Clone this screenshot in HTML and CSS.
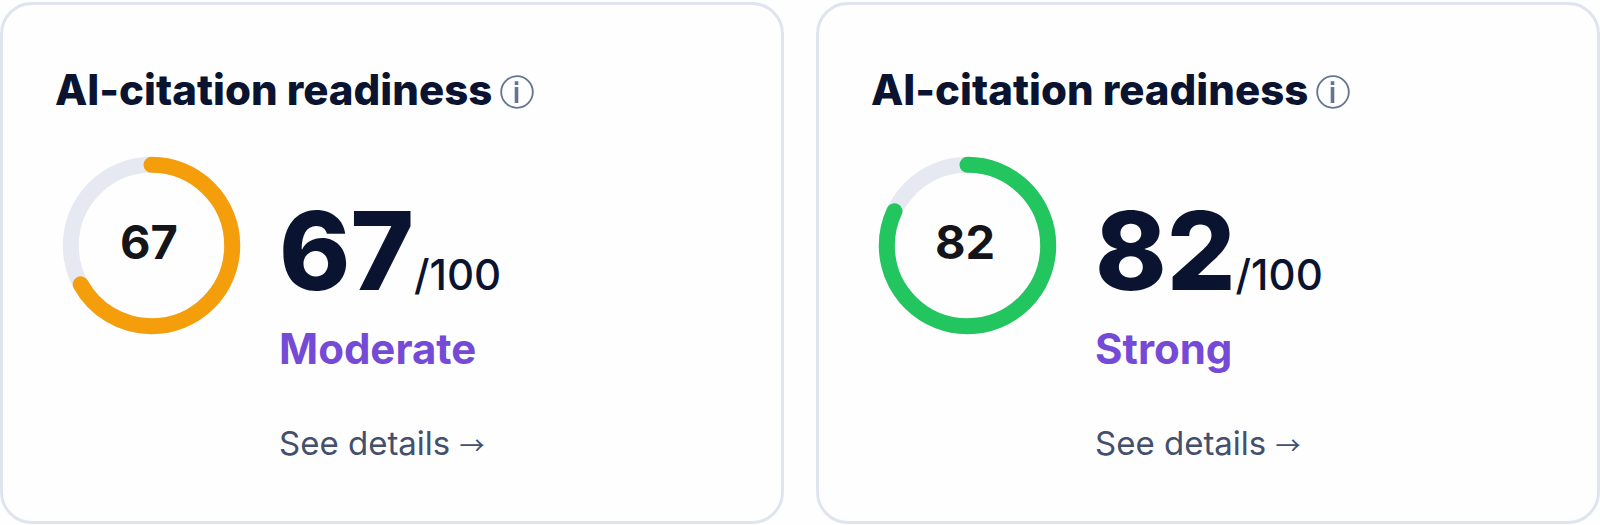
FILE: index.html
```
<!DOCTYPE html>
<html lang="en">

<head>
    <meta charset="UTF-8">
    <meta name="viewport" content="width=device-width, initial-scale=1.0">
    <title>AI-citation readiness</title>
    <link rel="stylesheet" href="styles.css">
</head>

<body>
    <main class="cards">
        <section class="card">
            <div class="card-header">
                <h2 class="card-title">AI-citation readiness</h2>
                <button class="info-button" type="button" aria-label="About this score">
                    <svg class="info-icon" viewBox="0 0 34 34" aria-hidden="true">
                        <circle cx="17" cy="17" r="15.8" />
                        <path d="M16.5 12v16" />
                        <path d="M16.5 6.2v3.8" />
                    </svg>
                </button>
            </div>
            <div class="card-body">
                <svg class="gauge gauge-moderate" viewBox="0 0 192 192" role="img" aria-label="67 of 100">
                    <circle class="gauge-track" cx="96.5" cy="95.5" r="80.7" />
                    <circle class="gauge-value" cx="96.5" cy="95.5" r="80.7" pathLength="100" stroke-dasharray="67 100" transform="rotate(-90 96.5 95.5)" />
                    <text class="gauge-text" x="94" y="109">67</text>
                </svg>
                <div class="details">
                    <p class="score"><strong class="score-value">67</strong><span class="score-max">/100</span></p>
                    <p class="rating">Moderate</p>
                    <a class="details-link" href="#">See details <span class="arrow">→</span></a>
                </div>
            </div>
        </section>

        <section class="card">
            <div class="card-header">
                <h2 class="card-title">AI-citation readiness</h2>
                <button class="info-button" type="button" aria-label="About this score">
                    <svg class="info-icon" viewBox="0 0 34 34" aria-hidden="true">
                        <circle cx="17" cy="17" r="15.8" />
                        <path d="M16.5 12v16" />
                        <path d="M16.5 6.2v3.8" />
                    </svg>
                </button>
            </div>
            <div class="card-body">
                <svg class="gauge gauge-strong" viewBox="0 0 192 192" role="img" aria-label="82 of 100">
                    <circle class="gauge-track" cx="96.5" cy="95.5" r="80.7" />
                    <circle class="gauge-value" cx="96.5" cy="95.5" r="80.7" pathLength="100" stroke-dasharray="82 100" transform="rotate(-90 96.5 95.5)" />
                    <text class="gauge-text" x="94" y="109">82</text>
                </svg>
                <div class="details">
                    <p class="score"><strong class="score-value">82</strong><span class="score-max">/100</span></p>
                    <p class="rating">Strong</p>
                    <a class="details-link" href="#">See details <span class="arrow">→</span></a>
                </div>
            </div>
        </section>
    </main>
</body>

</html>
```

FILE: styles.css
```
* {
    box-sizing: border-box;
}

body {
    margin: 0;
    background: #fefefe;
    color: #0a1431;
    font-family: Inter, "Liberation Sans", sans-serif;
}

.cards {
    display: grid;
    grid-template-columns: 1fr 1fr;
    gap: 32px;
    padding-top: 2px;
}

.card {
    padding: 59px 52px 57px;
    border: 3px solid #dfe4ee;
    border-radius: 32px;
    background: #fefefe;
}

.card-header {
    display: flex;
    align-items: center;
    gap: 8px;
}

.card-title {
    margin: 0;
    font-size: 42px;
    font-weight: 800;
    line-height: 52px;
}

.info-button {
    display: flex;
    margin-top: 4px;
    padding: 0;
    border: 0;
    background: none;
    color: #64748f;
    cursor: pointer;
}

.info-icon {
    width: 34px;
    height: 34px;
    fill: none;
    stroke: currentColor;
}

.info-icon circle {
    stroke-width: 1.8;
}

.info-icon path {
    stroke-width: 3.6;
}

.card-body {
    display: flex;
    align-items: flex-start;
    gap: 32px;
    margin-top: 34px;
}

.gauge {
    flex: none;
    width: 192px;
    height: 192px;
}

.gauge circle {
    fill: none;
    stroke-width: 16;
}

.gauge-track {
    stroke: #e6e9f2;
}

.gauge-value {
    stroke-linecap: round;
}

.gauge-moderate .gauge-value {
    stroke: #f59e0b;
}

.gauge-strong .gauge-value {
    stroke: #22c55e;
}

.gauge-text {
    fill: #14151a;
    font-size: 47px;
    font-weight: 700;
    text-anchor: middle;
}

.details {
    padding-top: 45px;
}

.score {
    display: flex;
    align-items: baseline;
    margin: 0;
    line-height: 112px;
}

.score-value {
    font-size: 108px;
    font-weight: 800;
}

.score-max {
    font-size: 42px;
    font-weight: 500;
    line-height: 52px;
}

.rating {
    margin: 16px 0 0;
    color: #754ad6;
    font-size: 42px;
    font-weight: 700;
    line-height: 52px;
}

.details-link {
    display: inline-block;
    margin-top: 48px;
    color: #434f6d;
    font-size: 33px;
    line-height: 40px;
    text-decoration: none;
}

.arrow {
    font-family: "Noto Sans CJK SC", sans-serif;
    font-size: 25px;
}
```
